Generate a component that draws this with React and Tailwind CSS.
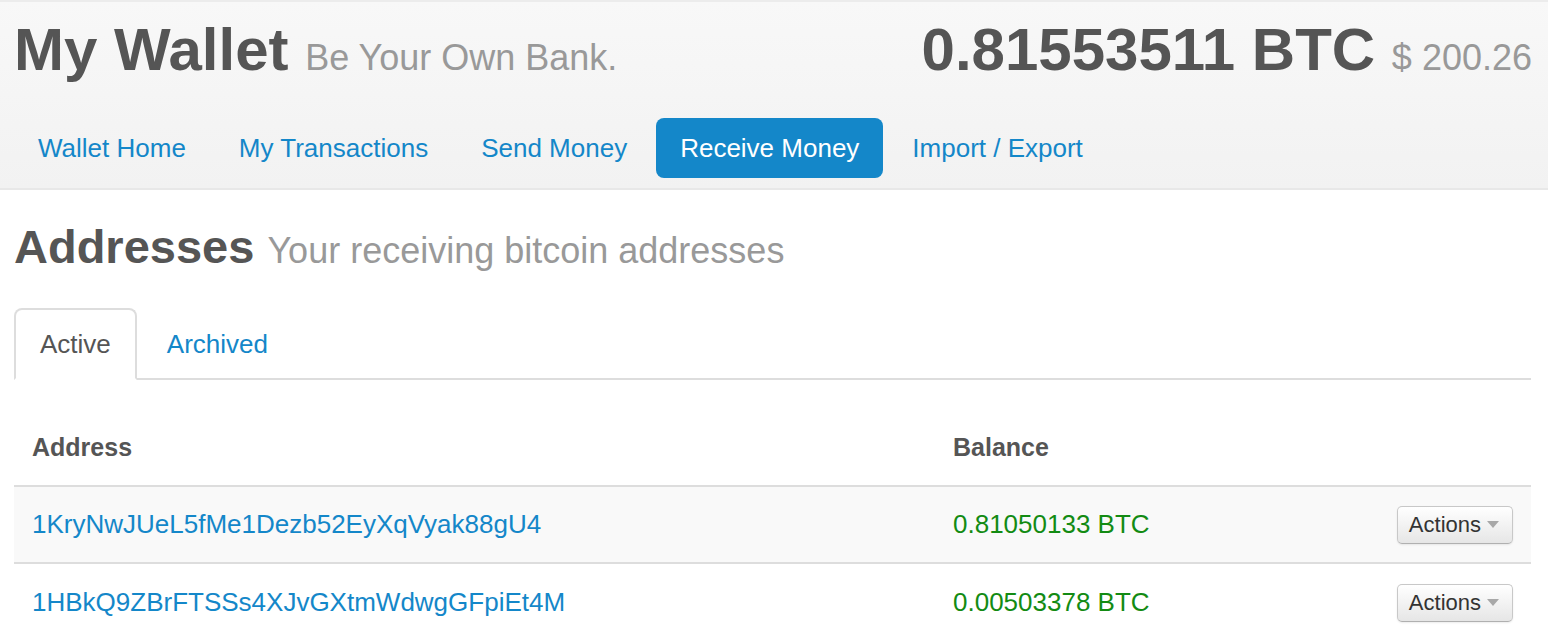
import React from 'react';

const font = { fontFamily: '"Liberation Sans", Arial, sans-serif' };

const navItems = ['Wallet Home', 'My Transactions', 'Send Money', 'Receive Money', 'Import / Export'];

const rows = [
  { address: '1KryNwJUeL5fMe1Dezb52EyXqVyak88gU4', balance: '0.81050133 BTC', striped: true },
  { address: '1HBkQ9ZBrFTSSs4XJvGXtmWdwgGFpiEt4M', balance: '0.00503378 BTC', striped: false },
];

const ActionsButton = () => (
  <button className="flex items-center h-[38px] pl-[11px] pr-[13px] rounded-[5px] border border-[#c8c8c8] border-b-[#b0b0b0] bg-linear-to-b from-white to-[#e6e6e6] shadow-[0_1px_2px_rgba(0,0,0,0.08)] text-[22px] text-[#333]">
    Actions
    <span className="ml-[6px] w-0 h-0 border-x-[6px] border-x-transparent border-t-[7px] border-t-[#a8a8a8]" />
  </button>
);

export default function App() {
  return (
    <div className="min-h-screen bg-white" style={font}>
      {/* Top header */}
      <header className="border-t-2 border-t-[#ececec] border-b-2 border-b-[#e8e8e8] bg-linear-to-b from-[#f8f8f8] to-[#f2f2f2] pl-[14px] pr-[16px] pt-[15px] pb-[10px]">
        <div className="flex items-baseline justify-between">
          <h1 className="text-[60px] leading-[66px] font-bold text-[#555]">
            My Wallet <span className="text-[36px] leading-none font-normal text-[#999]">Be Your Own Bank.</span>
          </h1>
          <div className="text-[60px] leading-[66px] font-bold text-[#555]">
            0.81553511 BTC <span className="text-[36px] leading-none font-normal text-[#999]">$ 200.26</span>
          </div>
        </div>

        <nav className="flex gap-[5px] mt-[35px]">
          {navItems.map((item) => (
            <a
              key={item}
              className={
                item === 'Receive Money'
                  ? 'flex items-center h-[60px] px-[24px] rounded-[8px] bg-[#1487c9] text-white text-[26px]'
                  : 'flex items-center h-[60px] px-[24px] rounded-[8px] text-[#1487c9] text-[26px]'
              }
            >
              {item}
            </a>
          ))}
        </nav>
      </header>

      <main className="pl-[14px] pr-[17px] pt-[31px]">
        <h2 className="text-[47px] leading-[52px] font-bold text-[#555]">
          Addresses <span className="text-[36px] leading-none font-normal text-[#999]">Your receiving bitcoin addresses</span>
        </h2>

        {/* Tabs */}
        <div className="flex mt-[35px] border-b-2 border-[#dddddd]">
          <div className="flex items-center h-[72px] -mb-[2px] px-[24px] border-2 border-[#dddddd] border-b-white rounded-t-[8px] bg-white text-[26px] text-[#555]">
            Active
          </div>
          <div className="flex items-center h-[72px] -mb-[2px] ml-[4px] px-[24px] border-2 border-transparent text-[26px] text-[#1487c9]">
            Archived
          </div>
        </div>

        {/* Address table */}
        <div className="mt-[30px] grid grid-cols-[921px_1fr_auto]">
          <div className="flex items-center h-[77px] px-[18px] border-b-2 border-[#dddddd] text-[25px] font-bold text-[#555]">Address</div>
          <div className="flex items-center h-[77px] px-[18px] border-b-2 border-[#dddddd] text-[25px] font-bold text-[#555]">Balance</div>
          <div className="h-[77px] border-b-2 border-[#dddddd]" />

          {rows.map((r, i) => {
            const cell = `flex items-center h-[77px] px-[18px] ${i < rows.length - 1 ? 'border-b-2 border-[#dddddd]' : ''} ${r.striped ? 'bg-[#f9f9f9]' : 'bg-white'}`;
            return (
              <React.Fragment key={r.address}>
                <div className={`${cell} text-[26px] text-[#1487c9]`}>{r.address}</div>
                <div className={`${cell} text-[26px] text-[#138b13]`}>{r.balance}</div>
                <div className={cell}>
                  <ActionsButton />
                </div>
              </React.Fragment>
            );
          })}
        </div>
      </main>
    </div>
  );
}
